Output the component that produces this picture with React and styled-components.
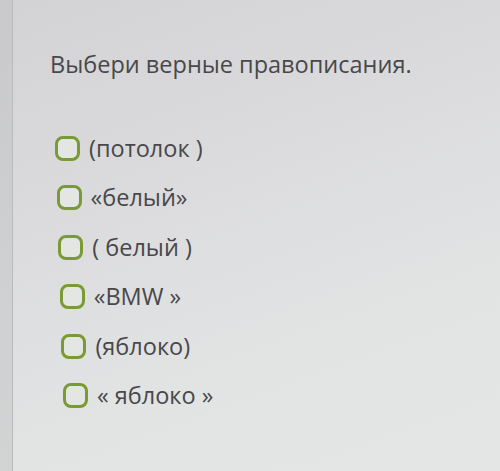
import React from 'react'
import styled, { createGlobalStyle } from 'styled-components'

const GlobalStyle = createGlobalStyle`
    html, body {
        margin: 0;
        padding: 0;
        width: 500px;
        height: 471px;
        overflow: hidden;
    }

    body {
        font-family: "Open Sans", "Noto Sans", sans-serif;
        background: #d6d6d8;
    }
`;

const Screen = styled.div`
    display: flex;
    width: 500px;
    height: 471px;
`;

const Rail = styled.div`
    width: 12px;
    flex-shrink: 0;
    background: linear-gradient(180deg, #c9c9cc 0%, #cfd0d1 60%, #d2d3d3 100%);
    border-right: 1px solid #b9babc;
`;

const Panel = styled.div`
    flex: 1;
    display: flex;
    flex-direction: column;
    padding: 48px 0 0 37px;
    background: linear-gradient(160deg, #d3d3d6 0%, #dcdcde 40%, #e2e4e4 70%, #e4e6e6 100%);
`;

const Question = styled.h2`
    margin: 0 0 56px;
    font-size: 23.5px;
    font-weight: 400;
    line-height: 32px;
    color: #48484a;
`;

const Options = styled.ul`
    list-style: none;
    margin: 0;
    padding: 0;
    display: flex;
    flex-direction: column;
    gap: 24.4px;
`;

const Option = styled.li`
    display: flex;
    align-items: center;
    gap: 9px;
    height: 25px;
    padding-left: ${p => p.$shift}px;
`;

const Box = styled.span`
    width: 19px;
    height: 19px;
    flex-shrink: 0;
    border: 3px solid #7a9a33;
    border-radius: 8px;
    background: #e4e6e4;
`;

const Label = styled.span`
    font-size: 23.5px;
    line-height: 25px;
    color: #48484a;
    white-space: pre;
`;

const options = [
    '(потолок )',
    '«белый»',
    '( белый )',
    '«BMW »',
    '(яблоко)',
    '« яблоко »',
]

const App = () => {
    return (
        <Screen>
            <GlobalStyle />
            <Rail />
            <Panel>
                <Question>Выбери верные правописания.</Question>
                <Options>
                    {options.map((text, i) => (
                        <Option key={i} $shift={5 + i * 1.6}>
                            <Box />
                            <Label>{text}</Label>
                        </Option>
                    ))}
                </Options>
            </Panel>
        </Screen>
    )
}

export default App
